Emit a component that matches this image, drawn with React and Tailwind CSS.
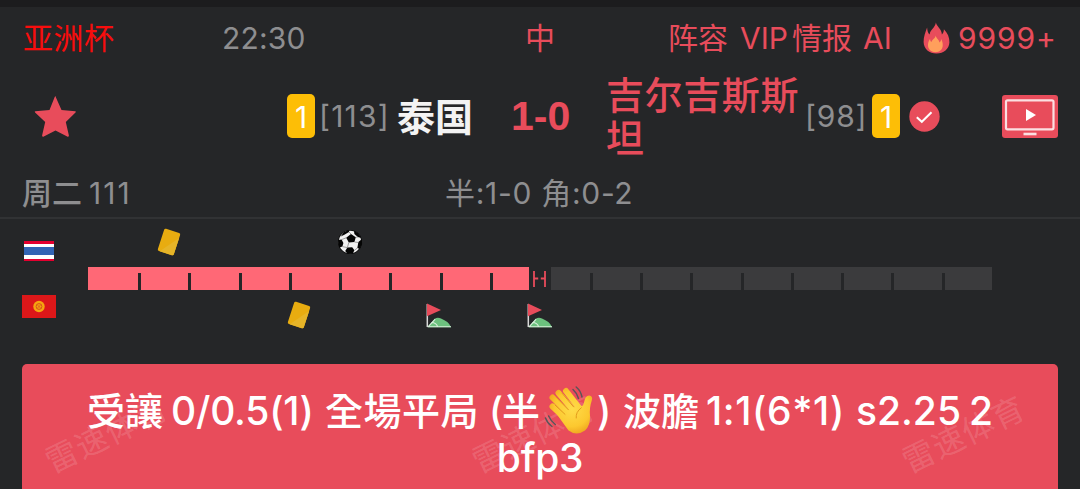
const homeMarks = [{ type: 'card', gap: 'ml-[69px]' }, { type: 'ball', gap: 'ml-[156px]' }];
const awayMarks = [{ type: 'card', gap: 'ml-[199px]' }, { type: 'corner', gap: 'ml-[115px]' }, { type: 'corner', gap: 'ml-[75px]' }];

function StarIcon() {
  return (
    <svg className="h-[44px] w-[44px]" viewBox="0 0 44 44" fill="#e84c5b">
      <path d="M22.5 2.5 28.5 16 42.3 17.2 Q43.4 17.6 42.5 18.6 L32.8 28 35.9 41.4 Q35.8 43.2 34.2 42.5 L22.5 36.5 10.8 42.5 Q9.2 43.2 9.1 41.4 L12.2 28 2.1 18.6 Q1.2 17.6 2.3 17.2 L16.5 16 21.7 2.9 Q22.5 1.7 23.3 2.9Z" />
    </svg>
  );
}

function FireIcon() {
  return (
    <svg className="h-[32px] w-[27px]" viewBox="0 0 27 32">
      <path fill="#e84c5b" d="M12.9.6C13.6 4.5 18.7 7.2 18.9 12.4 20 11.8 20.9 9.5 20.9 7.3 24.5 11 26.6 15.4 26.4 20.6 26.1 27.2 20.6 31.5 13.6 31.5 6.3 31.5.8 27 .6 20 .5 14.7 2.5 10 4.1 5.4 4.3 8.1 4.8 11.2 6.6 12.4 7.5 7.5 12.2 5.8 12.9.6Z" />
      <path fill="#ff9f5c" d="M12.5 13.5C13.1 16.3 16.2 17.6 16.4 20.5 17.6 19.8 18.2 18.6 18.1 17.1 20.7 21.2 21.3 29.8 12.5 30.3 7.4 30.1 4.5 26.4 5 22.3 5.2 20.2 6.1 18.3 7.1 16.8 7.1 18.5 7.5 19.4 8.5 20 9.2 17.3 12.5 16.5 12.5 13.5Z" />
    </svg>
  );
}

function TvIcon() {
  return (
    <svg className="h-[43px] w-[56px]" viewBox="0 0 56 43">
      <rect width="56" height="43" rx="3" fill="#e84c5b" />
      <rect x="4" y="5.3" width="47.5" height="29" rx="1.5" fill="none" stroke="#fbdfe2" strokeWidth="2.2" />
      <path d="M24 14 34 20 24 26Z" fill="#fff" />
      <path d="M21.5 39H34.5" stroke="#fbdfe2" strokeWidth="2.6" />
    </svg>
  );
}

function CheckBadge() {
  return (
    <svg className="h-[31px] w-[31px]" viewBox="0 0 31 31">
      <circle cx="15.5" cy="15.5" r="15.2" fill="#e84c5b" />
      <path d="m7.8 16.2 5 4.6 9.7-9.6" fill="none" stroke="#fff" strokeWidth="2" />
    </svg>
  );
}

function CardIcon() {
  return (
    <svg className="h-[28px] w-[24px]" viewBox="0 0 24 28">
      <g transform="rotate(18 12 14)">
        <rect x="3.6" y="2.3" width="16.8" height="23.4" rx="1.6" fill="#e8ac10" />
        <path d="M20.4 7V24a1.6 1.6 0 0 1-1.6 1.7H6Z" fill="#e6b428" />
      </g>
    </svg>
  );
}

function BallIcon() {
  return (
    <svg className="h-[26px] w-[26px]" viewBox="0 0 26 26">
      <circle cx="13" cy="13" r="12" fill="#0a0a0a" />
      <circle cx="13" cy="13" r="11.2" fill="#f1f1f1" />
      <g fill="#050505">
        <path d="M14 5 18.8 8.2 17.4 13 11.8 13.6 9.2 8.8Z" />
        <path d="M6.8 3 12.4 1 12 3 7.8 5.4 3.8 7.4Z" />
        <path d="m17 1.8 4 2.2 3.2 5-3.4-1-3.4-3Z" />
        <path d="M1 11 4.6 10.6 6.4 14 5.4 17.6 2.2 18.5Z" />
        <path d="m10.4 18.6 4.8-.3 2.2 3-1.6 3.3-5 .3-2.6-3Z" />
        <path d="m21.4 12.9 3.5-3 .2 5.1-2.4 5-2.4-1Z" />
      </g>
      <path d="m9.2 8.8-4.6 1.8M11.8 13.6l-1.4 5M17.4 13l4 .5M18.8 8.2l2-.2M14 5 12 3M5.4 17.6l5 1M17.4 21.3l3-2.3" fill="none" stroke="#777" strokeWidth=".7" />
    </svg>
  );
}

function CornerIcon() {
  return (
    <svg className="h-[25px] w-[26px]" viewBox="0 0 26 25">
      <path d="M2 23.2 8.5 16Q11.5 13.8 15 15.6 22.5 18.5 25.2 24.2H2Z" fill="#6cc17e" />
      <path d="M2.5 23.4 9.2 16.2M5.5 19.5Q10.3 19.6 11.5 23.5M1.5 23.7H25" fill="none" stroke="#d9eedc" strokeWidth="1.1" />
      <path d="M1.3 1V24" stroke="#d8d8d8" strokeWidth="1.5" />
      <path d="M1 .5 15 6.9 1 13.3Z" fill="#e84c5b" />
    </svg>
  );
}

function WaveIcon() {
  return (
    <svg className="h-[52px] w-[52px]" viewBox="0 0 52 52">
      <defs>
        <radialGradient id="skin" gradientUnits="userSpaceOnUse" cx="29" cy="24" r="27">
          <stop offset="0" stopColor="#ffdc4a" />
          <stop offset=".65" stopColor="#fcc82f" />
          <stop offset="1" stopColor="#eda01c" />
        </radialGradient>
      </defs>
      <g fill="none" stroke="url(#skin)" strokeWidth="6" strokeLinecap="round">
        <path d="M9.5 21.5 24 35M9.5 12.5 27 30M15.5 8 31 26M23 6 37 24" />
      </g>
      <path d="M14 29.5 37 20.5Q40 22.5 41.2 16.8 42.4 10.5 46.2 10.6 50.1 11 48.8 15.5 46.2 22.5 47 31 47.5 40.5 42 45.5 33.5 51.5 25.5 45.5Z" fill="url(#skin)" />
      <path d="M12.3 20.3 22 29.3M13 12.2 25.4 24.8M18.8 8 30.5 21.8M33.2 33Q32.5 27 38.3 22.8" fill="none" stroke="#e39b1c" strokeWidth="1" strokeLinecap="round" />
      <g fill="none" stroke="#5c5559" strokeWidth="1.5" strokeLinecap="round">
        <path d="M30 4.5Q34 8 35.5 13.5M33.2 2Q37.7 5.7 39 12M2.5 33Q4.5 38.5 9 41.5M5.6 31Q7.8 36 12.3 39.5" />
      </g>
    </svg>
  );
}

function ThaiFlag() {
  return (
    <div className="ml-[2px] flex h-[20px] w-[30px] flex-col">
      <i className="h-[2.5px] bg-[#e4002f]" />
      <i className="h-[3.5px] bg-white" />
      <i className="h-[8px] bg-[#3264b4]" />
      <i className="h-[3.5px] bg-white" />
      <i className="h-[2.5px] bg-[#e4002f]" />
    </div>
  );
}

function KyrgyzFlag() {
  return (
    <svg className="h-[23px] w-[34px]" viewBox="0 0 34 23">
      <rect width="34" height="23" fill="#dc1719" />
      <circle cx="17" cy="11.5" r="5.7" fill="#f5a510" />
      <circle cx="17" cy="11.5" r="2.9" fill="none" stroke="#d8541a" strokeWidth="1" />
      <path d="m15 9.5 4 4m0-4-4 4" stroke="#d8541a" strokeWidth=".8" />
    </svg>
  );
}

const markIcons = { card: CardIcon, ball: BallIcon, corner: CornerIcon };

function MarkRow({ marks }) {
  return (
    <div className="flex h-[28px] items-center">
      {marks.map((m, i) => {
        const Icon = markIcons[m.type];
        return <div key={i} className={m.gap}><Icon /></div>;
      })}
    </div>
  );
}

function HalfBar({ color, lead }) {
  return (
    <div className={`flex h-[23px] w-[441px] items-end ${color}`}>
      {Array.from({ length: 8 }, (_, i) => (
        <div key={i} className={`flex shrink-0 justify-end ${i === 0 ? lead : 'w-[50.25px]'}`}>
          <i className="h-[17px] w-[3px] bg-[#252628]" />
        </div>
      ))}
    </div>
  );
}

function YellowCount({ children }) {
  return <span className="flex h-[44px] w-[28px] shrink-0 items-center justify-center rounded-[5px] bg-[#fdbe06] pt-[2px] text-[30px] text-white">{children}</span>;
}

function Watermark({ place }) {
  return <span className={`absolute top-[49px] w-[140px] -rotate-26 text-center text-[32px] leading-[44px] font-normal tracking-[1px] whitespace-nowrap text-white/15 ${place}`}>雷速体育</span>;
}

export default function App() {
  return (
    <div className="h-[489px] w-[1080px] overflow-hidden bg-[#252628] font-['Inter','Noto_Sans_CJK_SC',sans-serif] text-[30px] whitespace-nowrap text-[#8e8e90]">
      <div className="h-[7px] bg-[#1c1c1e]" />

      <header className="flex h-[62px] items-center pl-[23px] leading-[44px]">
        <span className="w-[199px] tracking-[0.5px] text-[#f80d0d]">亚洲杯</span>
        <span className="w-[303px] tracking-[0.2px]">22:30</span>
        <span className="w-[143px] text-[#e84c5b]">中</span>
        <span className="w-[72px] text-[#e84c5b]">阵容</span>
        <span className="w-[52px] text-[#e84c5b]">VIP</span>
        <span className="w-[71px] text-[#e84c5b]">情报</span>
        <span className="w-[60px] text-[#e84c5b]">AI</span>
        <FireIcon />
        <span className="ml-[8px] tracking-[0.9px] text-[#e84c5b]">9999+</span>
      </header>

      <section className="flex h-[94px] items-center pl-[33px]">
        <StarIcon />
        <div className="ml-[210px] flex items-center">
          <YellowCount>1</YellowCount>
          <span className="ml-[4px] w-[78px] tracking-[1.2px]">[113]</span>
          <span className="w-[114px] pt-[2px] text-[38px] font-bold text-[#f3f3f3]">泰国</span>
        </div>
        <span className="w-[95px] pt-[2px] font-['Liberation_Sans',sans-serif] text-[41px] font-bold text-[#e84c5b]">1-0</span>
        <span className="w-[199px] pt-[1px] text-[38px] leading-[43px] font-medium tracking-[0.6px] whitespace-normal text-[#e84c5b]">吉尔吉斯斯坦</span>
        <span className="w-[67px] tracking-[0.8px]">[98]</span>
        <YellowCount>1</YellowCount>
        <div className="ml-[9px]"><CheckBadge /></div>
        <div className="ml-[62px]"><TvIcon /></div>
      </section>

      <section className="flex h-[56px] items-center border-b-2 border-[#313234] pt-[5px] pl-[22px] leading-[44px]">
        <span className="w-[67px] font-medium">周二</span>
        <span className="w-[356px] tracking-[2px]">111</span>
        <span className="tracking-[0.7px]">半:1-0 角:0-2</span>
      </section>

      <section className="flex h-[145px] pl-[22px]">
        <div className="flex w-[66px] flex-col pt-[22px]">
          <ThaiFlag />
          <div className="mt-[34px]"><KyrgyzFlag /></div>
        </div>
        <div className="flex w-[904px] flex-col pt-[9px]">
          <MarkRow marks={homeMarks} />
          <div className="mt-[11px] flex items-center">
            <HalfBar color="bg-[#ff6876]" lead="w-[53.2px]" />
            <svg className="h-[23px] w-[22px]" viewBox="0 0 22 23" fill="none" stroke="#e84c5b" strokeWidth="1.8">
              <path d="M5 4V20M16 4V20M5 11.5H9.2M11.8 11.5H16" />
            </svg>
            <HalfBar color="bg-[#3b3b3d]" lead="w-[41.8px]" />
          </div>
          <div className="mt-[11px]"><MarkRow marks={awayMarks} /></div>
        </div>
      </section>

      <section className="relative mx-[22px] h-[130px] overflow-hidden rounded-t-[5px] bg-[#e84c5b] pt-[24px] text-[39px] leading-[46px] font-medium text-white">
        <Watermark place="left-[15px]" />
        <Watermark place="left-[442px]" />
        <Watermark place="left-[872px]" />
        <div className="relative flex h-[46px] items-center pl-[65px] font-['Inter','Noto_Sans_CJK_TC',sans-serif]">
          <span className="w-[84px] text-[38px]">受讓</span>
          <span className="w-[154px] tracking-[-0.2px]">0/0.5(1)</span>
          <span className="w-[164px] text-[38px] tracking-[0.5px]">全場平局</span>
          <span className="w-[54px] text-[38px] tracking-[-1px]">(半</span>
          <WaveIcon />
          <span className="w-[28px] pl-[2px]">)</span>
          <span className="w-[83px] text-[38px]">波膽</span>
          <span className="w-[150px] tracking-[0.6px]">1:1(6<span className="[font-feature-settings:'calt'_0]">*</span>1)</span>
          <span className="w-[113px]">s2.25</span>
          <span>2</span>
        </div>
        <p className="relative pt-[1px] text-center tracking-[-0.3px]">bfp3</p>
      </section>
    </div>
  );
}
